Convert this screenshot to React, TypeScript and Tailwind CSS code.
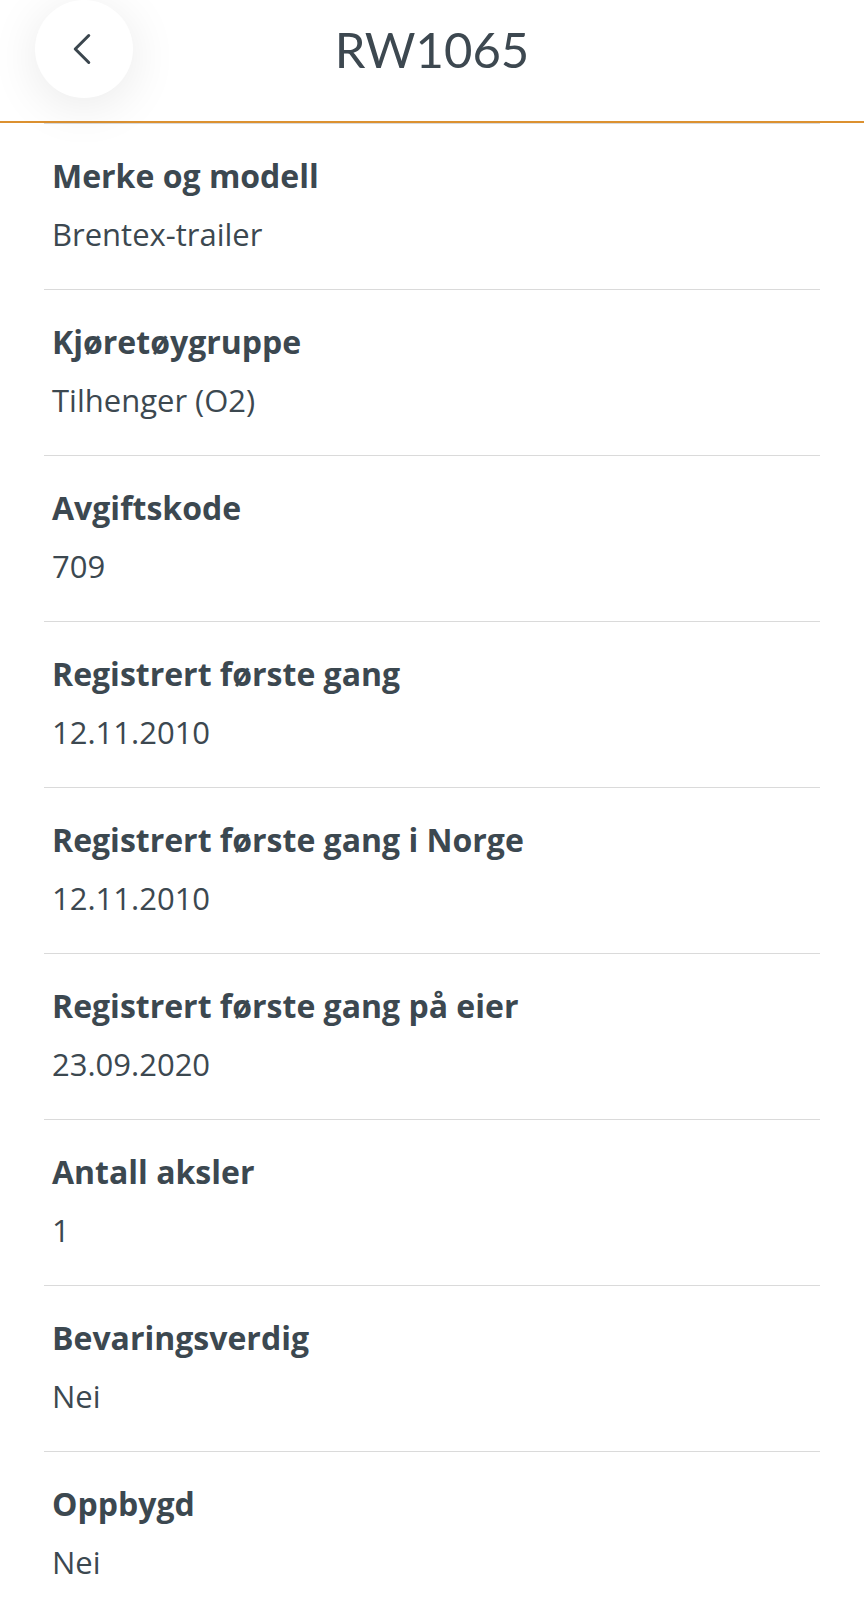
import { ChevronLeft } from 'lucide-react'

interface Field {
  label: string
  value: string
}

const fields: Field[] = [
  { label: 'Merke og modell', value: 'Brentex-trailer' },
  { label: 'Kjøretøygruppe', value: 'Tilhenger (O2)' },
  { label: 'Avgiftskode', value: '709' },
  { label: 'Registrert første gang', value: '12.11.2010' },
  { label: 'Registrert første gang i Norge', value: '12.11.2010' },
  { label: 'Registrert første gang på eier', value: '23.09.2020' },
  { label: 'Antall aksler', value: '1' },
  { label: 'Bevaringsverdig', value: 'Nei' },
  { label: 'Oppbygd', value: 'Nei' },
]

function Header({ title }: { title: string }) {
  return (
    <header className="bg-white border-b-2 border-[#dc9130] pb-[25px]">
      <div className="grid grid-cols-[1fr_auto_1fr] items-center h-[96px]">
        <div className="pl-[35px]">
          <button className="w-[98px] h-[98px] rounded-full bg-white flex items-center justify-center shadow-[0_8px_50px_rgba(0,0,0,0.09)]">
            <ChevronLeft className="w-[54px] h-[54px] -ml-[4px] text-[#3b464e]" strokeWidth={1.35} />
          </button>
        </div>
        <h1 className="font-['Lato',sans-serif] text-[49px] leading-none text-[#3d4850]">{title}</h1>
        <div />
      </div>
    </header>
  )
}

export default function App() {
  return (
    <div className="min-h-screen bg-white font-['Open_Sans','Noto_Sans',sans-serif] text-[#3c4850]">
      <Header title="RW1065" />
      <ul className="mx-[44px]">
        {fields.map((f) => (
          <li key={f.label} className="border-t border-[#dadada] pt-[32px] pb-[35px] px-2">
            <div className="text-[32px] leading-[40px] font-bold">{f.label}</div>
            <div className="mt-[18px] text-[31px] leading-[40px]">{f.value}</div>
          </li>
        ))}
      </ul>
    </div>
  )
}
